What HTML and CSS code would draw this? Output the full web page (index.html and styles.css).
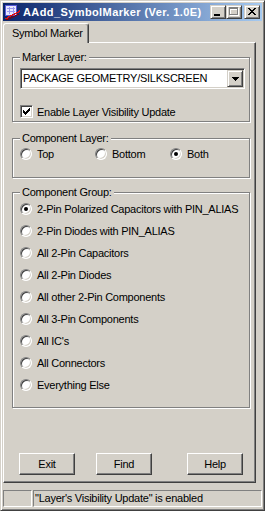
FILE: index.html
```html
<!DOCTYPE html>
<html>

<head>
	<meta charset="UTF-8">
	<title>AAdd_SymbolMarker</title>
	<link rel="stylesheet" href="styles.css">
</head>

<body>
	<div class="window">
		<div class="titleBar">
			<svg class="appIcon" width="16" height="16" viewBox="0 0 16 16" shape-rendering="crispEdges">
				<rect x="1" y="1" width="12" height="11" fill="#5858d8" />
				<rect x="2" y="2" width="10" height="9" fill="#e8e8ff" />
				<path d="M3 4h8v1h-8zM3 7h8v1h-8zM5 3h1v7h-1zM9 3h1v7h-1z" fill="#9898f0" />
				<path d="M1 14h2v-1h1v-1h2v-1h2v-1h2v-1h2v-1h2v-1h1v-1h1v2h-1v1h-2v1h-2v1h-2v1h-2v1h-2v1h-1v1h-3z" fill="#e01010" />
				<path d="M2 15h3v-1h2v-1h2v-1h2v-1h2v-1h2v1h-2v1h-2v1h-2v1h-2v1h-2v1h-3z" fill="#800000" />
			</svg>
			<span class="titleText">AAdd_SymbolMarker (Ver. 1.0E)</span>
			<div class="captionButton">
				<svg width="14" height="12" viewBox="0 0 14 12" shape-rendering="crispEdges">
					<path d="M3 8h6v2h-6z" fill="#000" />
				</svg>
			</div>
			<div class="captionButton">
				<svg width="14" height="12" viewBox="0 0 14 12" shape-rendering="crispEdges">
					<path d="M3 2h9v2h-9zM3 4h1v5h-1zM11 4h1v5h-1zM3 9h9v1h-9z" fill="#fff" />
					<path d="M2 1h9v2h-9zM2 3h1v5h-1zM10 3h1v5h-1zM2 8h9v1h-9z" fill="#808080" />
				</svg>
			</div>
			<div class="captionButton closeButton">
				<svg width="14" height="12" viewBox="0 0 14 12" shape-rendering="crispEdges">
					<path d="M3 2h2v1h-2zM9 2h2v1h-2zM4 3h2v1h-2zM8 3h2v1h-2zM5 4h4v1h-4zM6 5h2v1h-2zM5 6h4v1h-4zM4 7h2v1h-2zM8 7h2v1h-2zM3 8h2v1h-2zM9 8h2v1h-2z" fill="#000" />
				</svg>
			</div>
		</div>

		<div class="tabStrip">
			<div class="tab selected">Symbol Marker</div>
		</div>

		<div class="tabPanel">
			<fieldset class="group markerGroup">
				<legend>Marker Layer:</legend>
				<div class="combo">
					<div class="comboText">PACKAGE GEOMETRY/SILKSCREEN</div>
					<div class="comboButton">
						<svg width="7" height="4" viewBox="0 0 7 4" shape-rendering="crispEdges">
							<path d="M0 0h7v1h-7zM1 1h5v1h-5zM2 2h3v1h-3zM3 3h1v1h-1z" fill="#000" />
						</svg>
					</div>
				</div>
				<div class="checkRow">
					<span class="checkbox">
						<svg width="7" height="7" viewBox="0 0 7 7" shape-rendering="crispEdges">
							<path d="M6 0h1v1h-1zM5 1h2v1h-2zM0 2h1v1h-1zM4 2h3v1h-3zM0 3h2v1h-2zM3 3h3v1h-3zM0 4h5v1h-5zM1 5h3v1h-3zM2 6h1v1h-1z" fill="#000" />
						</svg>
					</span>
					Enable Layer Visibility Update
				</div>
			</fieldset>

			<fieldset class="group layerGroup">
				<legend>Component Layer:</legend>
				<div class="radioRow">
					<div class="radioItem"><span class="radio"></span>Top</div>
					<div class="radioItem"><span class="radio"></span>Bottom</div>
					<div class="radioItem"><span class="radio checked"></span>Both</div>
				</div>
			</fieldset>

			<fieldset class="group componentGroup">
				<legend>Component Group:</legend>
				<div class="radioList">
					<div class="radioItem"><span class="radio checked"></span>2-Pin Polarized Capacitors with PIN_ALIAS</div>
					<div class="radioItem"><span class="radio"></span>2-Pin Diodes with PIN_ALIAS</div>
					<div class="radioItem"><span class="radio"></span>All 2-Pin Capacitors</div>
					<div class="radioItem"><span class="radio"></span>All 2-Pin Diodes</div>
					<div class="radioItem"><span class="radio"></span>All other 2-Pin Components</div>
					<div class="radioItem"><span class="radio"></span>All 3-Pin Components</div>
					<div class="radioItem"><span class="radio"></span>All IC's</div>
					<div class="radioItem"><span class="radio"></span>All Connectors</div>
					<div class="radioItem"><span class="radio"></span>Everything Else</div>
				</div>
			</fieldset>

			<div class="buttonRow">
				<div class="pushButton" id="exitButton">Exit</div>
				<div class="pushButton" id="findButton">Find</div>
				<div class="pushButton" id="helpButton">Help</div>
			</div>
		</div>

		<div class="statusBar">
			<div class="statusPanel statusSmall"></div>
			<div class="statusPanel statusWide">"Layer's Visibility Update" is enabled</div>
		</div>
	</div>
</body>

</html>
```

FILE: styles.css
```css
body {
	margin: 0;
	background: #d4d0c8;
	font-family: "Liberation Sans", Arial, sans-serif;
	font-size: 11px;
	letter-spacing: -0.25px;
	color: #000;
}

.window {
	width: 265px;
	height: 511px;
	box-sizing: border-box;
	border: 1px solid;
	border-color: #d4d0c8 #404040 #404040 #d4d0c8;
	box-shadow: inset 1px 1px 0 #fff, inset -1px -1px 0 #808080;
	padding: 2px;
	display: flex;
	flex-direction: column;
	background: #d4d0c8;
}

/* title bar */

.titleBar {
	height: 18px;
	flex: none;
	display: flex;
	align-items: center;
	padding: 0 2px 0 1px;
	background: linear-gradient(to right, #0a246a, #a6caf0);
	color: #fff;
}

.appIcon {
	flex: none;
}

.titleText {
	flex: 1;
	margin-left: 3px;
	font-weight: bold;
	letter-spacing: 0.4px;
	line-height: 18px;
	white-space: nowrap;
}

.captionButton {
	width: 16px;
	height: 14px;
	box-sizing: border-box;
	border: 1px solid;
	border-color: #d4d0c8 #404040 #404040 #d4d0c8;
	box-shadow: inset 1px 1px 0 #fff, inset -1px -1px 0 #808080;
	background: #d4d0c8;
	display: flex;
}

.closeButton {
	margin-left: 2px;
}

/* tabs */

.tabStrip {
	height: 20px;
	margin-top: 2px;
	flex: none;
	display: flex;
}

.tab {
	position: relative;
	z-index: 1;
	width: 86px;
	height: 20px;
	box-sizing: border-box;
	border: 1px solid;
	border-bottom: 0;
	border-color: #fff #404040 #fff #fff;
	border-radius: 3px 3px 0 0;
	box-shadow: inset -1px 0 0 #808080;
	background: #d4d0c8;
	padding-left: 8px;
	line-height: 19px;
	white-space: nowrap;
}

.tabPanel {
	width: 253px;
	height: 441px;
	margin-top: -1px;
	flex: none;
	box-sizing: border-box;
	border: 1px solid;
	border-color: #fff #404040 #404040 #fff;
	box-shadow: inset -1px -1px 0 #808080;
	padding: 8px 5px 0 8px;
}

/* group boxes */

.group {
	margin: 0;
	padding: 0 4px 0 7px;
	min-inline-size: 0;
	border: 1px solid #808080;
	box-shadow: 1px 1px 0 #fff, inset 1px 1px 0 #fff;
}

.group legend {
	padding: 0 2px;
	line-height: 13px;
	background: #d4d0c8;
}

.markerGroup {
	padding-bottom: 2px;
}

.layerGroup {
	margin-top: 10px;
	padding-bottom: 14px;
}

.componentGroup {
	margin-top: 8px;
	padding-bottom: 13px;
}

.combo {
	margin-top: 4px;
	height: 21px;
	box-sizing: border-box;
	border: 1px solid;
	border-color: #808080 #fff #fff #808080;
	box-shadow: inset 1px 1px 0 #404040, inset -1px -1px 0 #d4d0c8;
	background: #fff;
	padding: 1px;
	display: flex;
}

.comboText {
	flex: 1;
	padding-left: 1px;
	line-height: 17px;
	white-space: nowrap;
}

.comboButton {
	width: 16px;
	height: 17px;
	box-sizing: border-box;
	border: 1px solid;
	border-color: #d4d0c8 #404040 #404040 #d4d0c8;
	box-shadow: inset 1px 1px 0 #fff, inset -1px -1px 0 #808080;
	background: #d4d0c8;
	display: flex;
	align-items: center;
	justify-content: center;
}

.checkRow {
	margin-top: 15px;
	height: 15px;
	display: flex;
	align-items: center;
}

.checkbox {
	width: 13px;
	height: 13px;
	box-sizing: border-box;
	border: 1px solid;
	border-color: #808080 #fff #fff #808080;
	box-shadow: inset 1px 1px 0 #404040, inset -1px -1px 0 #d4d0c8;
	background: #fff;
	margin-right: 4px;
	display: flex;
	align-items: center;
	justify-content: center;
	flex: none;
}

/* radios */

.radioRow {
	display: flex;
}

.radioRow .radioItem {
	width: 77px;
}

.radioList {
	padding-top: 1px;
	display: flex;
	flex-direction: column;
	gap: 4px;
}

.radioItem {
	height: 18px;
	display: flex;
	align-items: center;
	white-space: nowrap;
}

.radio {
	width: 12px;
	height: 12px;
	box-sizing: border-box;
	border: 1px solid;
	border-color: #808080 #fff #fff #808080;
	border-radius: 50%;
	box-shadow: inset 1px 1px 0 #404040, inset -1px -1px 0 #d4d0c8;
	background: #fff;
	margin-right: 5px;
	display: flex;
	align-items: center;
	justify-content: center;
	flex: none;
}

.radio.checked::after {
	content: '';
	width: 4px;
	height: 4px;
	border-radius: 50%;
	background: #000;
}

/* buttons */

.buttonRow {
	margin-top: 45px;
	display: flex;
}

.pushButton {
	width: 56px;
	height: 22px;
	box-sizing: border-box;
	border: 1px solid;
	border-color: #fff #404040 #404040 #fff;
	box-shadow: inset -1px -1px 0 #808080;
	text-align: center;
	line-height: 20px;
}

#exitButton {
	margin-left: 7px;
}

#findButton {
	margin-left: 21px;
}

#helpButton {
	margin-left: 35px;
}

/* status bar */

.statusBar {
	margin-top: 7px;
	height: 17px;
	flex: none;
	display: flex;
	gap: 1px;
}

.statusPanel {
	box-sizing: border-box;
	border: 1px solid;
	border-color: #808080 #fff #fff #808080;
	line-height: 15px;
	white-space: nowrap;
}

.statusSmall {
	width: 29px;
}

.statusWide {
	flex: 1;
	padding-left: 1px;
}
```
